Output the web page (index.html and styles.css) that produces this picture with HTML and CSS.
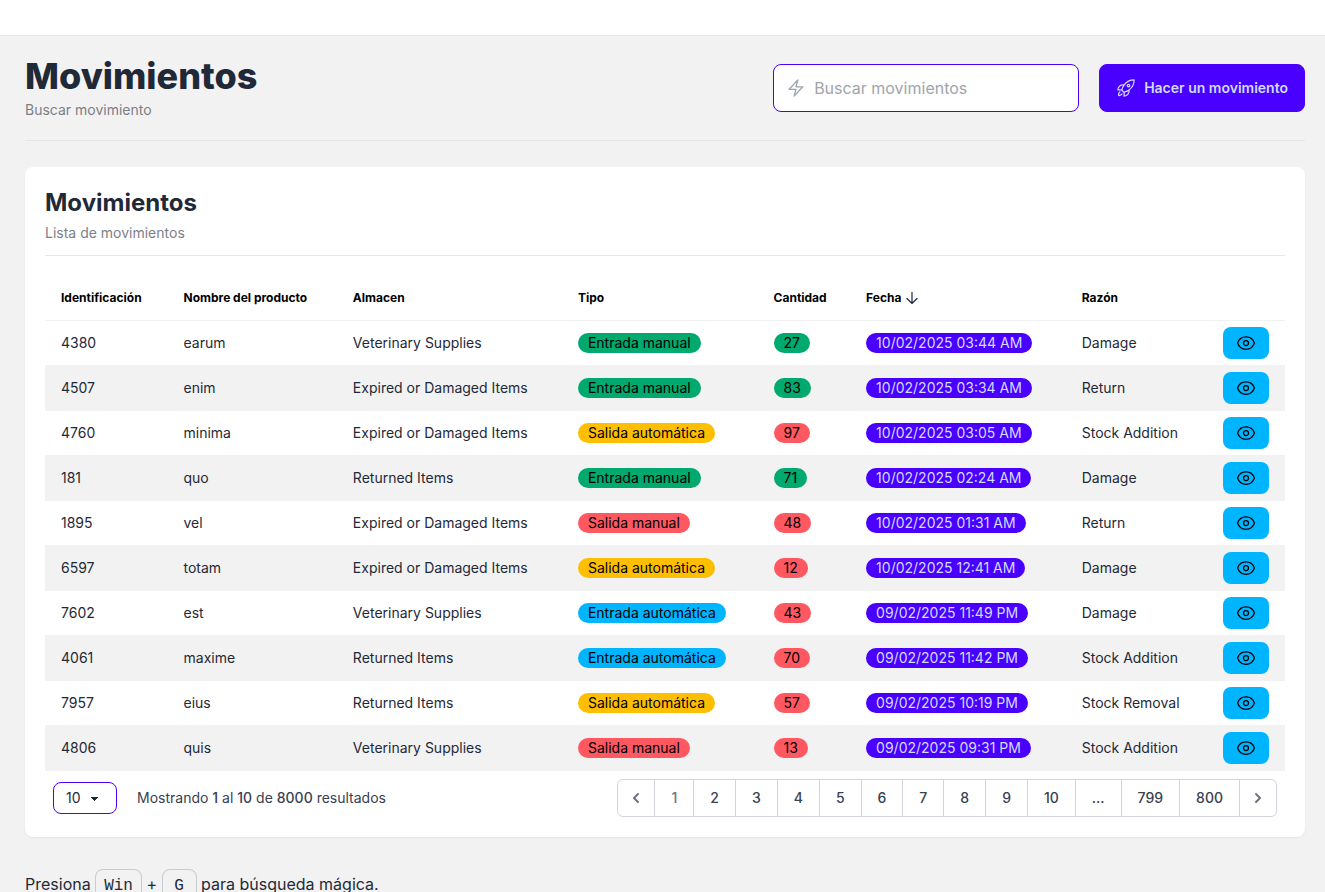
FILE: index.html
```html
<!DOCTYPE html>
<html lang="es">
<head>
<meta charset="utf-8">
<meta name="viewport" content="width=device-width, initial-scale=1">
<title>Movimientos</title>
<link rel="stylesheet" href="styles.css">
</head>
<body>
<svg class="sprite" aria-hidden="true">
  <symbol id="eye" viewBox="0 0 24 24"><path d="M2.036 12.322a1.012 1.012 0 0 1 0-.639C3.423 7.51 7.36 4.5 12 4.5c4.638 0 8.573 3.007 9.963 7.178.07.207.07.431 0 .639C20.577 16.49 16.64 19.5 12 19.5c-4.638 0-8.573-3.007-9.963-7.178Z"/><path d="M15 12a3 3 0 1 1-6 0 3 3 0 0 1 6 0Z"/></symbol>
</svg>
<nav class="topbar"></nav>
<main class="content">
  <header class="page-header">
    <div class="heading">
      <h1>Movimientos</h1>
      <p class="subtitle">Buscar movimiento</p>
    </div>
    <div class="actions">
      <label class="search">
        <svg class="icon" viewBox="0 0 24 24"><path d="m3.75 13.5 10.5-11.25L12 10.5h8.25L9.75 21.75 12 13.5H3.75Z"/></svg>
        <input type="search" placeholder="Buscar movimientos" aria-label="Buscar movimientos">
      </label>
      <button class="primary" type="button">
        <svg class="icon" viewBox="0 0 24 24"><path d="M15.59 14.37a6 6 0 0 1-5.84 7.38v-4.8m5.84-2.58a14.98 14.98 0 0 0 6.16-12.12A14.98 14.98 0 0 0 9.631 8.41m5.96 5.96a14.926 14.926 0 0 1-5.841 2.58m-.119-8.54a6 6 0 0 0-7.381 5.84h4.8m2.581-5.84a14.927 14.927 0 0 0-2.58 5.84m2.699 2.7c-.103.021-.207.041-.311.06a15.09 15.09 0 0 1-2.448-2.448 14.9 14.9 0 0 1 .06-.312m-2.24 2.39a4.493 4.493 0 0 0-1.757 4.306 4.493 4.493 0 0 0 4.306-1.758M16.5 9a1.5 1.5 0 1 1-3 0 1.5 1.5 0 0 1 3 0Z"/></svg>
        Hacer un movimiento
      </button>
    </div>
  </header>
  <section class="card">
    <h2>Movimientos</h2>
    <p class="subtitle">Lista de movimientos</p>
    <hr>
    <table>
      <thead>
        <tr><th>Identificación</th><th>Nombre del producto</th><th>Almacen</th><th>Tipo</th><th>Cantidad</th><th><span class="sorted">Fecha <svg class="sort-icon" viewBox="0 0 12 12"><path d="M6 .5v11M1 6.5l5 5 5-5"/></svg></span></th><th>Razón</th><th class="action-col"></th></tr>
      </thead>
      <tbody>
        <tr><td>4380</td><td>earum</td><td>Veterinary Supplies</td><td><span class="badge success">Entrada manual</span></td><td><span class="badge success">27</span></td><td><span class="badge date">10/02/2025 03:44 AM</span></td><td>Damage</td><td><button class="view" type="button" aria-label="Ver"><svg class="icon"><use href="#eye"/></svg></button></td></tr>
        <tr><td>4507</td><td>enim</td><td>Expired or Damaged Items</td><td><span class="badge success">Entrada manual</span></td><td><span class="badge success">83</span></td><td><span class="badge date">10/02/2025 03:34 AM</span></td><td>Return</td><td><button class="view" type="button" aria-label="Ver"><svg class="icon"><use href="#eye"/></svg></button></td></tr>
        <tr><td>4760</td><td>minima</td><td>Expired or Damaged Items</td><td><span class="badge warning">Salida automática</span></td><td><span class="badge error">97</span></td><td><span class="badge date">10/02/2025 03:05 AM</span></td><td>Stock Addition</td><td><button class="view" type="button" aria-label="Ver"><svg class="icon"><use href="#eye"/></svg></button></td></tr>
        <tr><td>181</td><td>quo</td><td>Returned Items</td><td><span class="badge success">Entrada manual</span></td><td><span class="badge success">71</span></td><td><span class="badge date">10/02/2025 02:24 AM</span></td><td>Damage</td><td><button class="view" type="button" aria-label="Ver"><svg class="icon"><use href="#eye"/></svg></button></td></tr>
        <tr><td>1895</td><td>vel</td><td>Expired or Damaged Items</td><td><span class="badge error">Salida manual</span></td><td><span class="badge error">48</span></td><td><span class="badge date">10/02/2025 01:31 AM</span></td><td>Return</td><td><button class="view" type="button" aria-label="Ver"><svg class="icon"><use href="#eye"/></svg></button></td></tr>
        <tr><td>6597</td><td>totam</td><td>Expired or Damaged Items</td><td><span class="badge warning">Salida automática</span></td><td><span class="badge error">12</span></td><td><span class="badge date">10/02/2025 12:41 AM</span></td><td>Damage</td><td><button class="view" type="button" aria-label="Ver"><svg class="icon"><use href="#eye"/></svg></button></td></tr>
        <tr><td>7602</td><td>est</td><td>Veterinary Supplies</td><td><span class="badge info">Entrada automática</span></td><td><span class="badge error">43</span></td><td><span class="badge date">09/02/2025 11:49 PM</span></td><td>Damage</td><td><button class="view" type="button" aria-label="Ver"><svg class="icon"><use href="#eye"/></svg></button></td></tr>
        <tr><td>4061</td><td>maxime</td><td>Returned Items</td><td><span class="badge info">Entrada automática</span></td><td><span class="badge error">70</span></td><td><span class="badge date">09/02/2025 11:42 PM</span></td><td>Stock Addition</td><td><button class="view" type="button" aria-label="Ver"><svg class="icon"><use href="#eye"/></svg></button></td></tr>
        <tr><td>7957</td><td>eius</td><td>Returned Items</td><td><span class="badge warning">Salida automática</span></td><td><span class="badge error">57</span></td><td><span class="badge date">09/02/2025 10:19 PM</span></td><td>Stock Removal</td><td><button class="view" type="button" aria-label="Ver"><svg class="icon"><use href="#eye"/></svg></button></td></tr>
        <tr><td>4806</td><td>quis</td><td>Veterinary Supplies</td><td><span class="badge error">Salida manual</span></td><td><span class="badge error">13</span></td><td><span class="badge date">09/02/2025 09:31 PM</span></td><td>Stock Addition</td><td><button class="view" type="button" aria-label="Ver"><svg class="icon"><use href="#eye"/></svg></button></td></tr>
      </tbody>
    </table>
    <footer class="table-footer">
      <select class="per-page" aria-label="Resultados por página"><option>10</option><option>20</option><option>50</option></select>
      <p class="results">Mostrando <b>1</b> al <b>10</b> de <b>8000</b> resultados</p>
      <nav class="pagination" aria-label="Paginación">
        <button class="muted arrow" type="button" disabled aria-label="Anterior"><svg viewBox="0 0 20 20"><path d="M12.707 5.293a1 1 0 010 1.414L9.414 10l3.293 3.293a1 1 0 01-1.414 1.414l-4-4a1 1 0 010-1.414l4-4a1 1 0 011.414 0z"/></svg></button>
        <button class="muted" type="button" aria-current="page">1</button>
        <button type="button">2</button>
        <button type="button">3</button>
        <button type="button">4</button>
        <button type="button">5</button>
        <button type="button">6</button>
        <button type="button">7</button>
        <button type="button">8</button>
        <button type="button">9</button>
        <button type="button">10</button>
        <span>...</span>
        <button type="button">799</button>
        <button type="button">800</button>
        <button class="muted arrow" type="button" aria-label="Siguiente"><svg viewBox="0 0 20 20"><path d="M7.293 14.707a1 1 0 010-1.414L10.586 10 7.293 6.707a1 1 0 011.414-1.414l4 4a1 1 0 010 1.414l-4 4a1 1 0 01-1.414 0z"/></svg></button>
      </nav>
    </footer>
  </section>
  <p class="hint">Presiona <kbd>Win</kbd> + <kbd>G</kbd> para búsqueda mágica.</p>
</main>
</body>
</html>
```
FILE: styles.css
```css
* { box-sizing: border-box; }
body {
  margin: 0;
  background: #f2f2f2;
  color: #1f2937;
  font-family: Inter, "Liberation Sans", sans-serif;
  font-size: 16px;
  line-height: 24px;
}
h1, h2, p { margin: 0; }
button, input, select { font: inherit; color: inherit; }
svg { display: block; flex: none; }
.sprite { position: absolute; width: 0; height: 0; }
.icon {
  width: 20px;
  height: 20px;
  fill: none;
  stroke: currentColor;
  stroke-width: 1.5;
  stroke-linecap: round;
  stroke-linejoin: round;
}
.topbar { height: 36px; background: #fff; border-bottom: 1px solid #e5e6e6; }
.content { padding: 20px 20px 20px 25px; }
.page-header {
  display: flex;
  align-items: center;
  justify-content: space-between;
  height: 85px;
  padding-bottom: 20px;
  margin-bottom: 26px;
  border-bottom: 1px solid #e5e6e6;
}
h1 { font-size: 36px; line-height: 40px; font-weight: 800; }
h2 { font-size: 24px; line-height: 32px; font-weight: 700; }
.subtitle { margin-top: 4px; font-size: 14px; line-height: 20px; color: #7c7f88; }
.actions { display: flex; gap: 20px; }
.search {
  display: flex;
  align-items: center;
  gap: 8px;
  width: 306px;
  height: 48px;
  padding: 0 12px;
  background: #fff;
  border: 1px solid #4a00ff;
  border-radius: 8px;
  color: #9ca3af;
}
.search input { flex: 1; min-width: 0; padding: 0; border: 0; outline: 0; background: none; color: #1f2937; }
.search input::placeholder { color: #a0a4ab; opacity: 1; }
.primary {
  display: flex;
  align-items: center;
  gap: 8px;
  height: 48px;
  padding: 0 16px;
  border: 1px solid #4a00ff;
  border-radius: 8px;
  background: #4a00ff;
  color: #d1dbff;
  font-size: 14px;
  font-weight: 600;
}
.card {
  padding: 20px;
  background: #fff;
  border-radius: 8px;
  box-shadow: 0 1px 2px rgba(0, 0, 0, 0.05);
}
hr { height: 1px; margin: 12px 0 19px; border: 0; background: #e5e6e6; }
table { width: 100%; border-collapse: separate; border-spacing: 0; font-size: 14px; line-height: 20px; }
th, td { padding: 6px 16px; border-bottom: 1px solid #f2f2f2; text-align: left; vertical-align: middle; white-space: nowrap; }
th { height: 46px; color: #000; font-size: 12px; font-weight: 700; }
td { height: 45px; }
.action-col { width: 78px; }
tbody tr:nth-child(even) { background: #f2f2f2; }
.sorted { display: flex; align-items: center; gap: 5px; }
.sort-icon { width: 12px; height: 12px; fill: none; stroke: #1f2937; stroke-width: 1.2; stroke-linecap: round; }
.badge { display: block; width: fit-content; padding: 0 10px; border-radius: 10px; color: #000; }
.success { background: #00a96e; }
.warning { background: #ffbe00; }
.error { background: #ff5861; }
.info { background: #00b5ff; }
.date { background: #4a00ff; color: #d1dbff; }
.view {
  display: flex;
  align-items: center;
  justify-content: center;
  width: 46px;
  height: 32px;
  padding: 0;
  border: 0;
  border-radius: 8px;
  background: #00b5ff;
  color: #000;
}
.table-footer { display: flex; align-items: center; padding: 8px 8px 0; font-size: 14px; line-height: 20px; }
.per-page {
  appearance: none;
  width: 64px;
  height: 32px;
  padding: 0 12px;
  border: 1px solid #4a00ff;
  border-radius: 8px;
  background:
    linear-gradient(45deg, transparent 50%, #1f2937 50%) 37px 14px / 4px 4px no-repeat,
    linear-gradient(135deg, #1f2937 50%, transparent 50%) 41px 14px / 4px 4px no-repeat,
    #fff;
}
.results { margin: 0 auto 0 20px; color: #374151; }
.results b { font-weight: 500; }
.pagination {
  display: flex;
  border: 1px solid #d1d5db;
  border-radius: 6px;
  color: #374151;
  font-weight: 500;
}
.pagination > * { height: 36px; padding: 8px 16px; border: 0; border-left: 1px solid #d1d5db; background: none; }
.pagination > :first-child { border-left: 0; }
.pagination .muted { color: #6b7280; }
.pagination .arrow { padding: 8px; }
.pagination svg { width: 20px; height: 20px; fill: currentColor; }
.hint { margin-top: 32px; }
kbd {
  display: inline-flex;
  align-items: center;
  justify-content: center;
  min-width: 35px;
  height: 35px;
  padding: 0 8px;
  border: 1px solid #c9cccf;
  border-bottom-width: 2px;
  border-radius: 8px;
  font-family: "Liberation Mono", monospace;
  font-size: 16px;
}
```
